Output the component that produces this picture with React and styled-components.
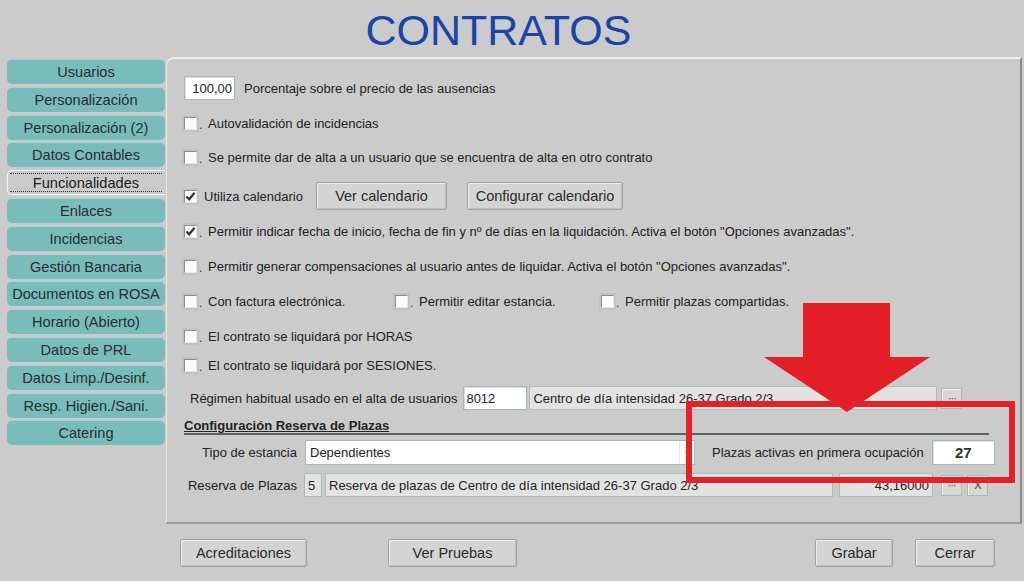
import React from 'react'
import styled, { createGlobalStyle } from 'styled-components'

const GlobalStyle = createGlobalStyle`
  html, body {
    margin: 0;
    padding: 0;
    background: #cbcbcb;
  }
  body {
    font-family: "Liberation Sans", Arial, sans-serif;
    color: #222;
  }
`

const tabs = [
    'Usuarios', 'Personalización', 'Personalización (2)', 'Datos Contables',
    'Funcionalidades', 'Enlaces', 'Incidencias', 'Gestión Bancaria',
    'Documentos en ROSA', 'Horario (Abierto)', 'Datos de PRL',
    'Datos Limp./Desinf.', 'Resp. Higien./Sani.', 'Catering',
]

function Check({ checked, dot = true }) {
    return (
        <CheckWrap $w={dot ? 24 : 20}>
            <CheckBox>
                {checked &&
                    <svg width="11" height="11" viewBox="0 0 11 11">
                        <path d="M1.5 5.5 L4.2 8.3 L9.5 1.8" fill="none" stroke="#333" strokeWidth="2.2" />
                    </svg>}
            </CheckBox>
            {dot && <Dot>.</Dot>}
        </CheckWrap>
    )
}

function App() {
    return (
        <Page>
            <GlobalStyle />
            <Header>CONTRATOS</Header>
            <Main>
                <Sidebar>
                    {tabs.map((t) => t === 'Funcionalidades'
                        ? <ActiveTab key={t}><span>{t}</span></ActiveTab>
                        : <Tab key={t}>{t}</Tab>)}
                </Sidebar>
                <Panel>
                    <Row $h={24} $mt={0}>
                        <Input $w={51} $align="right">100,00</Input>
                        <Text $ml={9}>Porcentaje sobre el precio de las ausencias</Text>
                    </Row>
                    <Row $h={20} $mt={13}>
                        <Check /><Text>Autovalidación de incidencias</Text>
                    </Row>
                    <Row $h={20} $mt={14}>
                        <Check /><Text>Se permite dar de alta a un usuario que se encuentra de alta en otro contrato</Text>
                    </Row>
                    <Row $h={28} $mt={15}>
                        <Check checked dot={false} /><Text>Utiliza calendario</Text>
                        <Button $w={131} $ml={13}>Ver calendario</Button>
                        <Button $w={156} $ml={20}>Configurar calendario</Button>
                    </Row>
                    <Row $h={20} $mt={11}>
                        <Check checked />
                        <Text>Permitir indicar fecha de inicio, fecha de fin y nº de días en la liquidación. Activa el botón "Opciones avanzadas".</Text>
                    </Row>
                    <Row $h={20} $mt={15}>
                        <Check />
                        <Text>Permitir generar compensaciones al usuario antes de liquidar. Activa el botón "Opciones avanzadas".</Text>
                    </Row>
                    <Row $h={20} $mt={15}>
                        <Option $w={211}><Check /><Text>Con factura electrónica.</Text></Option>
                        <Option $w={206}><Check /><Text>Permitir editar estancia.</Text></Option>
                        <Option><Check /><Text>Permitir plazas compartidas.</Text></Option>
                    </Row>
                    <Row $h={20} $mt={15}>
                        <Check /><Text>El contrato se liquidará por HORAS</Text>
                    </Row>
                    <Row $h={20} $mt={9}>
                        <Check /><Text>El contrato se liquidará por SESIONES.</Text>
                    </Row>
                    <Row $h={24} $mt={11}>
                        <Text $ml={6}>Régimen habitual usado en el alta de usuarios</Text>
                        <Input $w={64} $ml={6}>8012</Input>
                        <Field $w={408} $ml={2}>Centro de día intensidad 26-37 Grado 2/3</Field>
                        <SmallButton $ml={4}><span>···</span></SmallButton>
                    </Row>
                    <SectionTitle><span>Configuración Reserva de Plazas</span></SectionTitle>
                    <Row $h={25} $mt={5}>
                        <Label>Tipo de estancia</Label>
                        <Select>
                            <span>Dependientes</span>
                            <SelectArrow>▾</SelectArrow>
                        </Select>
                        <Text $ml={17}>Plazas activas en primera ocupación</Text>
                        <Input $w={63} $ml={8} $align="center" $bold>27</Input>
                    </Row>
                    <Row $h={24} $mt={8}>
                        <Label>Reserva de Plazas</Label>
                        <Field $w={18} $ml={-1}>5</Field>
                        <Field $w={508} $ml={3}>Reserva de plazas de Centro de día intensidad 26-37 Grado 2/3</Field>
                        <Field $w={94} $ml={6} $align="right">43,16000</Field>
                        <SmallButton $ml={8}><span>···</span></SmallButton>
                        <SmallButton $ml={5}><span>X</span></SmallButton>
                    </Row>
                </Panel>
            </Main>
            <Footer>
                <ButtonGroup $gap={81}>
                    <Button $w={127}>Acreditaciones</Button>
                    <Button $w={129}>Ver Pruebas</Button>
                </ButtonGroup>
                <ButtonGroup $gap={22}>
                    <Button $w={78}>Grabar</Button>
                    <Button $w={80}>Cerrar</Button>
                </ButtonGroup>
            </Footer>

            <Arrow width="166" height="109" viewBox="0 0 166 109">
                <polygon points="39,0 126,0 126,54 166,54 83,109 0,54 39,54" fill="#e41e26" />
            </Arrow>
            <Highlight />
        </Page>
    )
}

const Page = styled.div`
    position: relative;
    width: 1024px;
    height: 581px;
    overflow: hidden;
    background: #cbcbcb;
`

const Header = styled.h1`
    margin: 0;
    height: 57px;
    box-sizing: border-box;
    padding: 4px 27px 0 0;
    line-height: 53px;
    text-align: center;
    font-family: "Liberation Sans", Arial, sans-serif;
    font-weight: normal;
    font-size: 43px;
    color: #1745a8;
`

const Main = styled.div`
    display: flex;
    padding-left: 7px;
`

const Sidebar = styled.div`
    width: 158px;
    display: flex;
    flex-direction: column;
    gap: 2.8px;
    padding-top: 2px;
`

const Tab = styled.div`
    height: 25px;
    box-sizing: border-box;
    display: flex;
    align-items: center;
    justify-content: center;
    background: #78bcbc;
    border-top: 1px solid #a6d4d4;
    border-radius: 5px;
    font-size: 14.6px;
    color: #2c2c2c;
    white-space: nowrap;
`

const ActiveTab = styled.div`
    height: 25px;
    box-sizing: border-box;
    display: flex;
    align-items: center;
    padding: 0 3px 0 2px;
    border: 1px solid #f4f4f4;
    border-right: none;
    border-radius: 5px 0 0 5px;
    span{
        flex: 1;
        height: 19px;
        line-height: 18px;
        box-sizing: border-box;
        text-align: center;
        border-top: 1px dotted #333;
        border-bottom: 1px dotted #333;
        font-size: 14.6px;
        color: #222;
    }
`

const Panel = styled.div`
    margin-left: 1px;
    width: 856px;
    height: 467px;
    box-sizing: border-box;
    padding: 17px 20px 0 17px;
    border-top: 2px solid #eeeeee;
    border-left: 1px solid #e6e6e6;
    border-right: 2px solid #8a8a8a;
    border-bottom: 2px solid #9a9a9a;
    border-top-left-radius: 8px;
    display: flex;
    flex-direction: column;
`

const Row = styled.div`
    display: flex;
    align-items: center;
    height: ${p => p.$h}px;
    margin-top: ${p => p.$mt}px;
    flex-shrink: 0;
`

const Option = styled.div`
    display: flex;
    align-items: center;
    flex-shrink: 0;
    width: ${p => p.$w ? p.$w + 'px' : 'auto'};
`

const Text = styled.span`
    font-size: 13px;
    color: #222;
    white-space: nowrap;
    flex-shrink: 0;
    margin-left: ${p => p.$ml || 0}px;
`

const Label = styled.span`
    width: 113px;
    flex-shrink: 0;
    text-align: right;
    font-size: 13px;
    color: #222;
    margin-right: 8px;
    white-space: nowrap;
`

const CheckWrap = styled.span`
    display: flex;
    align-items: center;
    width: ${p => p.$w}px;
    flex-shrink: 0;
`

const CheckBox = styled.span`
    width: 13px;
    height: 13px;
    box-sizing: border-box;
    display: flex;
    align-items: center;
    justify-content: center;
    background: #fbfbfb;
    border-top: 1px solid #8c8c8c;
    border-left: 1px solid #8c8c8c;
    border-bottom: 1px solid #e8e8e8;
    border-right: 1px solid #e8e8e8;
    box-shadow: 0 0 0 2px #c2c2c2;
`

const Dot = styled.span`
    font-size: 12px;
    color: #333;
    margin: 4px 0 0 2px;
`

const Input = styled.div`
    width: ${p => p.$w}px;
    height: 100%;
    margin-left: ${p => p.$ml || 0}px;
    box-sizing: border-box;
    display: flex;
    align-items: center;
    justify-content: ${p => p.$align === 'right' ? 'flex-end' : p.$align === 'center' ? 'center' : 'flex-start'};
    padding: 0 2px;
    background: #ffffff;
    border: 1px solid #a4b8b8;
    box-shadow: inset 1px 1px 0 #d8dede;
    font-size: ${p => p.$bold ? '15px' : '13px'};
    font-weight: ${p => p.$bold ? 'bold' : 'normal'};
    color: ${p => p.$bold ? '#333' : '#222'};
    flex-shrink: 0;
`

const Field = styled.div`
    width: ${p => p.$w}px;
    height: 100%;
    margin-left: ${p => p.$ml || 0}px;
    box-sizing: border-box;
    display: flex;
    align-items: center;
    justify-content: ${p => p.$align === 'right' ? 'flex-end' : 'flex-start'};
    padding: 0 3px;
    background: #e2e2e2;
    border: 1px solid #a8bcbc;
    font-size: 13px;
    color: #222;
    white-space: nowrap;
    overflow: hidden;
    flex-shrink: 0;
`

const Select = styled.div`
    width: 390px;
    height: 100%;
    box-sizing: border-box;
    display: flex;
    align-items: center;
    justify-content: space-between;
    padding-left: 4px;
    background: #ffffff;
    border: 1px solid #a4b8b8;
    font-size: 13px;
    color: #222;
    flex-shrink: 0;
`

const SelectArrow = styled.span`
    width: 14px;
    height: 100%;
    display: flex;
    align-items: center;
    justify-content: center;
    border-left: 1px solid #e4e4e4;
    color: #d0d0d0;
    font-size: 11px;
`

const SmallButton = styled.div`
    width: 21px;
    height: 21px;
    margin-left: ${p => p.$ml || 0}px;
    box-sizing: border-box;
    display: flex;
    align-items: center;
    justify-content: center;
    background: #d8d8d8;
    border: 1px solid #b4b4b4;
    box-shadow: inset 1px 1px 0 #f0f0f0;
    flex-shrink: 0;
    span{
        font-size: 11px;
        line-height: 12px;
        color: #444;
        letter-spacing: -1px;
    }
`

const SectionTitle = styled.div`
    margin-top: 6px;
    height: 19px;
    flex-shrink: 0;
    box-sizing: border-box;
    border-bottom: 2px solid #606060;
    margin-right: 11px;
    span{
        font-size: 13px;
        font-weight: bold;
        text-decoration: underline;
        color: #222;
        line-height: 16px;
    }
`

const Button = styled.div`
    width: ${p => p.$w}px;
    height: 28px;
    margin-left: ${p => p.$ml || 0}px;
    box-sizing: border-box;
    display: flex;
    align-items: center;
    justify-content: center;
    background: #d4d4d4;
    border: 1px solid #a2a2a2;
    border-radius: 2px;
    box-shadow: inset 1px 1px 0 #ededed, inset -1px -1px 0 #bdbdbd;
    font-size: 14.5px;
    color: #2a2a2a;
    white-space: nowrap;
    flex-shrink: 0;
`

const Footer = styled.div`
    display: flex;
    justify-content: space-between;
    margin-top: 15px;
    padding: 0 29px 0 180px;
`

const ButtonGroup = styled.div`
    display: flex;
    gap: ${p => p.$gap}px;
`

const Arrow = styled.svg`
    position: absolute;
    left: 764px;
    top: 303px;
    pointer-events: none;
`

const Highlight = styled.div`
    position: absolute;
    left: 686px;
    top: 401px;
    width: 329px;
    height: 82px;
    box-sizing: border-box;
    border: 6px solid #e1222b;
    pointer-events: none;
`

export default App
